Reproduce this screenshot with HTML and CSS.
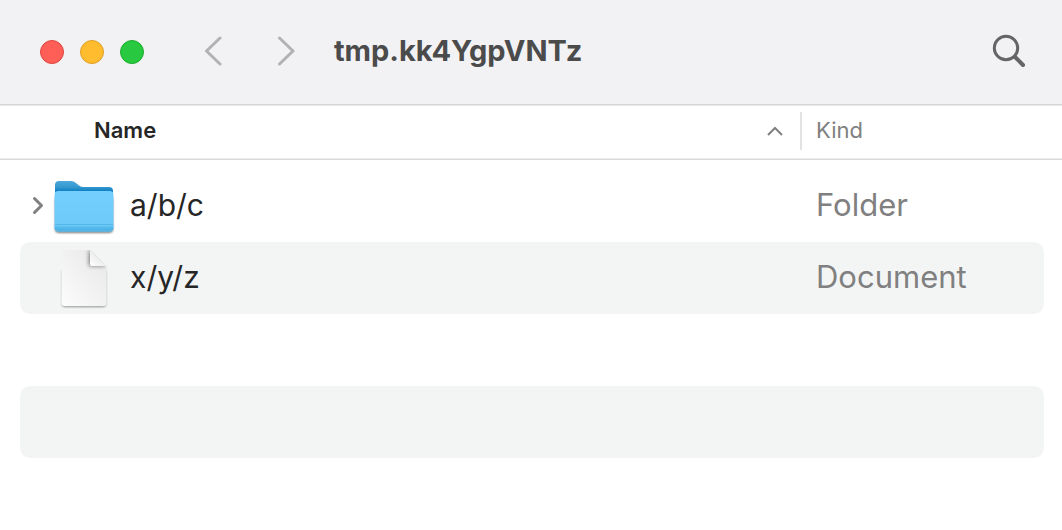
FILE: index.html
```html
<!DOCTYPE html>
<html lang="en">
<head>
<meta charset="utf-8">
<meta name="viewport" content="width=device-width, initial-scale=1">
<title>tmp.kk4YgpVNTz</title>
<link rel="stylesheet" href="styles.css">
</head>
<body>
<header class="toolbar">
  <div class="lights">
    <button class="light light-close" type="button" aria-label="Close"></button>
    <button class="light light-minimize" type="button" aria-label="Minimize"></button>
    <button class="light light-zoom" type="button" aria-label="Zoom"></button>
  </div>
  <nav class="history">
    <button class="icon-button" type="button" aria-label="Back">
      <svg width="20" height="32" viewBox="0 0 20 32"><path class="arrow" d="M16 2 L2.500 15 L16 28"/></svg>
    </button>
    <button class="icon-button" type="button" aria-label="Forward">
      <svg width="20" height="32" viewBox="0 0 20 32"><path class="arrow" d="M3.500 2 L17 15 L3.500 28"/></svg>
    </button>
  </nav>
  <h1 class="title">tmp.kk4YgpVNTz</h1>
  <button class="icon-button search" type="button" aria-label="Search">
    <svg width="36" height="36" viewBox="0 0 36 36"><circle class="lens" cx="15" cy="14" r="11.700"/><path class="handle" d="M24 23 L32 31"/></svg>
  </button>
</header>
<main>
  <table class="files">
    <thead>
      <tr>
        <th class="name" scope="col" aria-sort="ascending">
          <button class="sort" type="button">Name
            <svg width="18" height="12" viewBox="0 0 18 12"><path class="sort-arrow" d="M2 11 L9 4 L16 11"/></svg>
          </button>
        </th>
        <th class="kind" scope="col"><button class="sort" type="button">Kind</button></th>
      </tr>
    </thead>
    <tbody>
      <tr class="gap" aria-hidden="true"><td colspan="2"></td></tr>
      <tr>
        <td class="name">
          <div class="entry">
            <button class="icon-button expand" type="button" aria-label="Expand a/b/c">
              <svg width="12" height="20" viewBox="0 0 12 20"><path class="chevron" d="M2.500 3.500 L9.500 10.500 L2.500 17.500"/></svg>
            </button>
            <svg class="icon" width="64" height="64" viewBox="0 -5 64 64" aria-hidden="true">
              <defs>
                <linearGradient id="folder-back" x1="0" y1="0" x2="0" y2="1"><stop offset="0" stop-color="#4ba8dc"/><stop offset=".13" stop-color="#3599cf"/><stop offset=".22" stop-color="#0d7fc4"/></linearGradient>
                <linearGradient id="folder-front" x1="0" y1="0" x2="0" y2="1"><stop offset="0" stop-color="#74cffd"/><stop offset="1" stop-color="#6bc9f9"/></linearGradient>
              </defs>
              <path class="folder-shadow" d="M3 20 V51 Q3 55 7 55 H57 Q61 55 61 51 V20Z"/>
              <path fill="url(#folder-back)" d="M3 49 V7 Q3 3 7 3 H19 Q22 3 24 5 L27 7.500 Q29 9 32 9 H57 Q61 9 61 13 V49Z"/>
              <path fill="url(#folder-front)" d="M2.500 17 Q2.500 13 6.500 13 H57.500 Q61.500 13 61.500 17 V49 Q61.500 53.500 57 53.500 H7 Q2.500 53.500 2.500 49Z"/>
              <path fill="#52b5e9" d="M2.500 49.500 H61.500 Q61.500 53.500 57 53.500 H7 Q2.500 53.500 2.500 49.500Z"/>
              <path class="folder-lines" d="M3 46.500 H61 M3 49 H61"/>
            </svg>
            <span class="label">a/b/c</span>
          </div>
        </td>
        <td class="kind">Folder</td>
      </tr>
      <tr class="shaded">
        <td class="name">
          <div class="entry">
            <span class="expand"></span>
            <svg class="icon" width="64" height="64" viewBox="0 -1 64 64" aria-hidden="true">
              <defs>
                <linearGradient id="page" x1="0" y1="1" x2="1" y2="0"><stop offset="0" stop-color="#fcfcfc"/><stop offset="1" stop-color="#e7e7e7"/></linearGradient>
                <linearGradient id="fold" x1="0" y1="1" x2="1" y2="0"><stop offset="0" stop-color="#ffffff"/><stop offset=".5" stop-color="#ededed"/></linearGradient>
                <clipPath id="page-clip"><path d="M9.500 7 Q9.500 4 12.500 4 H38 L54.500 20 V57 Q54.500 60 51.500 60 H12.500 Q9.500 60 9.500 57Z"/></clipPath>
              </defs>
              <path class="page-shadow" d="M10 24 H54 V58 Q54 61 51 61 H13 Q10 61 10 58Z"/>
              <path fill="url(#page)" d="M9.500 7 Q9.500 4 12.500 4 H38 L54.500 20 V57 Q54.500 60 51.500 60 H12.500 Q9.500 60 9.500 57Z"/>
              <g clip-path="url(#page-clip)"><path class="fold-shadow" d="M37 4 V20 H54 L38 4Z"/></g>
              <path fill="url(#fold)" d="M38 4 V18 Q38 20 40 20 H54.500Z"/>
            </svg>
            <span class="label">x/y/z</span>
          </div>
        </td>
        <td class="kind">Document</td>
      </tr>
      <tr aria-hidden="true"><td class="name"></td><td class="kind"></td></tr>
      <tr class="shaded" aria-hidden="true"><td class="name"></td><td class="kind"></td></tr>
      <tr aria-hidden="true"><td class="name"></td><td class="kind"></td></tr>
    </tbody>
  </table>
</main>
</body>
</html>
```

FILE: styles.css
```css
* {
  box-sizing: border-box;
}

body {
  margin: 0;
  background: #ffffff;
  color: #262626;
  font-family: Inter, "Liberation Sans", sans-serif;
}

button {
  padding: 0;
  border: 0;
  background: none;
  color: inherit;
  font: inherit;
}

svg {
  display: block;
  flex: none;
  fill: none;
}

.toolbar {
  display: flex;
  align-items: center;
  height: 106px;
  padding: 0 35px 2px 40px;
  border-bottom: 1px solid #e9e9eb;
  box-shadow: inset 0 -1px #d6d6d8;
  background: #f2f2f4;
}

.lights {
  display: flex;
  gap: 16px;
}

.light {
  width: 24px;
  height: 24px;
  border: 1px solid;
  border-radius: 50%;
}

.light-close {
  background: #ff5f57;
  border-color: #e2463f;
}

.light-minimize {
  background: #febc2e;
  border-color: #dfa023;
}

.light-zoom {
  background: #28c840;
  border-color: #1dad2c;
}

.history {
  display: flex;
  gap: 52px;
  margin-left: 60px;
}

.arrow {
  stroke: #b2b2b4;
  stroke-width: 3;
  stroke-linecap: round;
  stroke-linejoin: round;
}

.title {
  flex: 1;
  margin: 0 0 0 38px;
  padding-bottom: 2px;
  color: #4b4b4c;
  font-size: 29px;
  font-weight: 700;
  line-height: 40px;
}

.lens,
.handle {
  stroke: #656567;
  stroke-width: 3;
  stroke-linecap: round;
}

.handle {
  stroke-width: 4;
}

.files {
  width: 100%;
  border-spacing: 0;
  table-layout: fixed;
}

.files th,
.files td {
  padding: 0 0 2px;
  text-align: left;
}

.files th {
  height: 54px;
  padding-bottom: 4px;
  border-bottom: 1px solid #dadadc;
  box-shadow: inset 0 -1px #ededee;
  font-size: 22px;
  line-height: 36px;
}

.files th.name {
  font-weight: 600;
}

.files th.kind {
  color: #808080;
  font-weight: 400;
}

.sort {
  display: flex;
  align-items: center;
  justify-content: space-between;
  width: 100%;
  padding-bottom: 2px;
}

.name .sort {
  padding-right: 16px;
  padding-left: 94px;
  border-right: 2px solid #e2e2e3;
}

.kind .sort {
  padding-left: 14px;
}

.sort-arrow {
  stroke: #808080;
  stroke-width: 2;
}

.files .kind {
  width: 260px;
}

.files tr.gap td {
  height: 10px;
}

.files td {
  height: 72px;
  background-clip: padding-box;
  font-size: 31px;
  line-height: 40px;
}

.files td.name {
  border-left: 20px solid transparent;
  border-radius: 30px 0 0 30px / 10px 0 0 10px;
}

.files td.kind {
  padding-left: 14px;
  border-right: 18px solid transparent;
  border-radius: 0 28px 28px 0 / 0 10px 10px 0;
  color: #808080;
}

.files tr.shaded td {
  background-color: #f3f5f5;
}

.entry {
  display: flex;
  align-items: center;
}

.expand {
  width: 32px;
  padding-left: 12px;
}

.chevron {
  stroke: #808080;
  stroke-width: 3;
  stroke-linecap: round;
  stroke-linejoin: round;
}

.label {
  margin-left: 14px;
  font-size: 30px;
}

.folder-shadow {
  fill: #000000;
  opacity: 0.5;
  filter: blur(1px);
}

.folder-lines {
  stroke: #55b6e8;
  stroke-width: 1;
}

.page-shadow {
  fill: #000000;
  opacity: 0.4;
  filter: blur(1px);
}

.fold-shadow {
  fill: #000000;
  opacity: 0.5;
  filter: blur(2px);
}
```
